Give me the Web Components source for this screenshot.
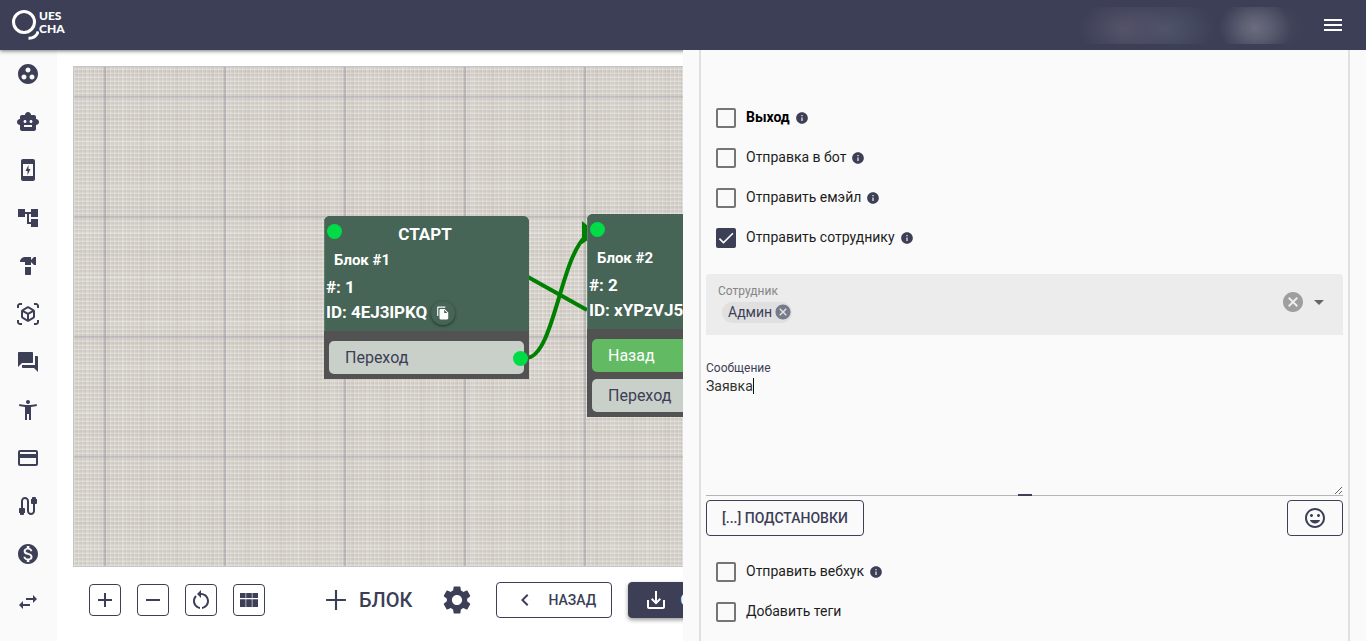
<!DOCTYPE html>
<html lang="ru">
<head>
<meta charset="utf-8">
<meta name="viewport" content="width=device-width, initial-scale=1">
<title>Quescha</title>
<style>
  html, body { margin: 0; height: 100%; }
  body { font: 14px/20px Roboto, sans-serif; color: #1d1d1d; background: #fff; --ink: #3c3f56; }
</style>
</head>
<body>
<app-shell></app-shell>
<script>
const ICONS = {
  group: 'M12 2C6.48 2 2 6.48 2 12s4.48 10 10 10 10-4.48 10-10S17.52 2 12 2zM8 17.5c-1.38 0-2.5-1.12-2.5-2.5s1.12-2.5 2.5-2.5 2.5 1.12 2.5 2.5-1.12 2.5-2.5 2.5zM9.5 8c0-1.38 1.12-2.5 2.5-2.5s2.5 1.12 2.5 2.5-1.12 2.5-2.5 2.5S9.5 9.38 9.5 8zm6.5 9.5c-1.38 0-2.5-1.12-2.5-2.5s1.12-2.5 2.5-2.5 2.5 1.12 2.5 2.5-1.12 2.5-2.5 2.5z',
  robot: 'M20 9V7c0-1.1-.9-2-2-2h-3c0-1.66-1.34-3-3-3S9 3.34 9 5H6c-1.1 0-2 .9-2 2v2c-1.66 0-3 1.34-3 3s1.34 3 3 3v4c0 1.1.9 2 2 2h12c1.1 0 2-.9 2-2v-4c1.66 0 3-1.34 3-3s-1.34-3-3-3zM7.5 11.5c0-.83.67-1.5 1.5-1.5s1.5.67 1.5 1.5S9.83 13 9 13s-1.5-.67-1.5-1.5zM16 17H8v-2h8v2zm-1-4c-.83 0-1.5-.67-1.5-1.5S14.17 10 15 10s1.5.67 1.5 1.5S15.83 13 15 13z',
  charge: 'M14.5 11l-3 6v-4h-2l3-6v4h2zM7 1h10c1.1 0 2 .9 2 2v18c0 1.1-.9 2-2 2H7c-1.1 0-2-.9-2-2V3c0-1.1.9-2 2-2zm0 5v12h10V6H7z',
  tree: 'M22 11V3h-7v3H9V3H2v8h7V8h2v10h4v3h7v-8h-7v3h-2V8h2v3z',
  hammer: 'M18 3l-3 3V3H9C6.24 3 4 5.24 4 8h5v3h6V8l3 3h2V3h-2zM9 13v7c0 .55.45 1 1 1h4c.55 0 1-.45 1-1v-7H9z',
  cube: 'M3 4c0-.55.45-1 1-1h2V1H4C2.34 1 1 2.34 1 4v2h2V4zM3 20v-2H1v2c0 1.66 1.34 3 3 3h2v-2H4c-.55 0-1-.45-1-1zM20 1h-2v2h2c.55 0 1 .45 1 1v2h2V4c0-1.66-1.34-3-3-3zM21 20c0 .55-.45 1-1 1h-2v2h2c1.66 0 3-1.34 3-3v-2h-2v2zM19 14.87V9.13c0-.72-.38-1.38-1-1.73l-5-2.88c-.31-.18-.65-.27-1-.27s-.69.09-1 .27L6 7.39c-.62.36-1 1.02-1 1.74v5.74c0 .72.38 1.38 1 1.73l5 2.88c.31.18.65.27 1 .27s.69-.09 1-.27l5-2.88c.62-.35 1-1.01 1-1.73zm-8 2.3l-4-2.3v-4.63l4 2.33v4.6zm1-6.33L8.04 8.53 12 6.25l3.96 2.28L12 10.84zm5 4.03l-4 2.3v-4.6l4-2.33v4.63z',
  chat: 'M21 6h-2v9H6v2c0 .55.45 1 1 1h11l4 4V7c0-.55-.45-1-1-1zm-4 6V3c0-.55-.45-1-1-1H3c-.55 0-1 .45-1 1v14l4-4h10c.55 0 1-.45 1-1z',
  person: 'M20.5 6c-2.61.7-5.67 1-8.5 1s-5.89-.3-8.5-1L3 8c1.86.5 4 .83 6 1v13h2v-6h2v6h2V9c2-.17 4.14-.5 6-1l-.5-2zM12 6c1.1 0 2-.9 2-2s-.9-2-2-2-2 .9-2 2 .9 2 2 2z',
  card: 'M20 4H4c-1.11 0-1.99.89-1.99 2L2 18c0 1.11.89 2 2 2h16c1.11 0 2-.89 2-2V6c0-1.11-.89-2-2-2zm0 14H4v-6h16v6zm0-10H4V6h16v2z',
  cable: 'M20 5V4c0-.55-.45-1-1-1h-2c-.55 0-1 .45-1 1v1h-1v4c0 .55.45 1 1 1h1v7c0 1.1-.9 2-2 2s-2-.9-2-2V7c0-2.21-1.79-4-4-4S5 4.79 5 7v7H4c-.55 0-1 .45-1 1v4h1v1c0 .55.45 1 1 1h2c.55 0 1-.45 1-1v-1h1v-4c0-.55-.45-1-1-1H7V7c0-1.1.9-2 2-2s2 .9 2 2v10c0 2.21 1.79 4 4 4s4-1.79 4-4v-7h1c.55 0 1-.45 1-1V5h-1z',
  money: 'M12 2C6.48 2 2 6.48 2 12s4.48 10 10 10 10-4.48 10-10S17.52 2 12 2zm1.41 16.09V20h-2.67v-1.93c-1.71-.36-3.16-1.46-3.27-3.4h1.96c.1 1.05.82 1.87 2.65 1.87 1.96 0 2.4-.98 2.4-1.59 0-.83-.44-1.61-2.67-2.14-2.48-.6-4.18-1.62-4.18-3.67 0-1.72 1.39-2.84 3.11-3.21V4h2.67v1.95c1.86.45 2.79 1.86 2.85 3.39H14.3c-.05-1.11-.64-1.87-2.22-1.87-1.5 0-2.4.68-2.4 1.64 0 .84.65 1.39 2.67 1.91s4.18 1.39 4.18 3.91c-.01 1.83-1.38 2.83-3.12 3.16z',
  swap: 'M6.99 11L3 15l3.99 4v-3H14v-2H6.99v-3zM21 9l-3.99-4v3H10v2h7.01v3L21 9z',
  menu: 'M3 18h18v-2H3v2zm0-5h18v-2H3v2zm0-7v2h18V6H3z',
  add: 'M19 13h-6v6h-2v-6H5v-2h6V5h2v6h6v2z',
  addThin: 'M19 12.75h-6.250V19h-1.500v-6.250H5v-1.500h6.250V5h1.500v6.250H19v1.500z',
  remove: 'M19 13H5v-2h14v2z',
  restart: 'M12 5V2L8 6l4 4V7c3.31 0 6 2.69 6 6 0 2.97-2.17 5.43-5 5.91v2.02c3.95-.49 7-3.85 7-7.93 0-4.42-3.58-8-8-8zM6 13c0-1.65.67-3.15 1.76-4.24L6.34 7.34C4.9 8.79 4 10.79 4 13c0 4.08 3.05 7.44 7 7.93v-2.02c-2.83-.48-5-2.94-5-5.91z',
  modules: 'M3 5h5.600v5H3zM9.200 5h5.600v5H9.200zM15.400 5H21v5h-5.600zM3 11.200h5.600V19H3zM9.200 11.200h5.600V19H9.200zM15.400 11.200H21V19h-5.600z',
  settings: 'M19.140 12.940c.04-.3.06-.61.06-.94 0-.32-.02-.64-.07-.94l2.030-1.580c.18-.14.23-.41.12-.61l-1.920-3.320c-.12-.22-.37-.29-.59-.22l-2.390.96c-.5-.38-1.030-.7-1.620-.94l-.36-2.540c-.04-.24-.24-.41-.48-.41h-3.840c-.24 0-.43.17-.47.41l-.36 2.540c-.59.24-1.130.57-1.620.94l-2.390-.96c-.22-.08-.47 0-.59.22L2.740 8.870c-.12.21-.08.47.12.61l2.030 1.580c-.05.3-.09.63-.09.94s.02.64.07.94l-2.030 1.580c-.18.14-.23.41-.12.61l1.920 3.320c.12.22.37.29.59.22l2.390-.96c.5.38 1.030.7 1.620.94l.36 2.540c.05.24.24.41.48.41h3.840c.24 0 .44-.17.47-.41l.36-2.540c.59-.24 1.130-.56 1.620-.94l2.390.96c.22.08.47 0 .59-.22l1.920-3.320c.12-.22.07-.47-.12-.61l-2.010-1.580zM12 15.600c-1.980 0-3.600-1.620-3.600-3.600s1.620-3.600 3.600-3.600 3.600 1.620 3.600 3.600-1.620 3.600-3.600 3.600z',
  left: 'M15.410 7.410L14 6l-6 6 6 6 1.410-1.410L10.830 12z',
  save: 'M19 12v7H5v-7H3v7c0 1.100.9 2 2 2h14c1.100 0 2-.9 2-2v-7h-2zm-6 .670l2.590-2.580L17 11.500l-5 5-5-5 1.410-1.410L11 12.670V3h2z',
  info: 'M12 2C6.480 2 2 6.480 2 12s4.480 10 10 10 10-4.480 10-10S17.520 2 12 2zm1 15h-2v-6h2v6zm0-8h-2V7h2v2z',
  cancel: 'M12 2C6.470 2 2 6.470 2 12s4.470 10 10 10 10-4.470 10-10S17.530 2 12 2zm5 13.590L15.590 17 12 13.410 8.410 17 7 15.590 10.590 12 7 8.410 8.410 7 12 10.590 15.590 7 17 8.410 13.410 12 17 15.590z',
  smile: 'M11.990 2C6.470 2 2 6.480 2 12s4.470 10 9.990 10C17.520 22 22 17.520 22 12S17.520 2 11.990 2zM12 20c-4.420 0-8-3.580-8-8s3.580-8 8-8 8 3.580 8 8-3.580 8-8 8zm3.500-9c.83 0 1.500-.67 1.500-1.500S16.330 8 15.500 8 14 8.670 14 9.500s.67 1.500 1.500 1.500zm-7 0c.83 0 1.500-.67 1.500-1.500S9.330 8 8.500 8 7 8.670 7 9.500 7.670 11 8.500 11zm3.500 6.500c2.330 0 4.310-1.460 5.110-3.500H6.890c.8 2.040 2.780 3.500 5.110 3.500z',
  copy: 'M16 1H4c-1.100 0-2 .9-2 2v14h2V3h12V1zm-1 4l6 6v10c0 1.100-.9 2-2 2H7.990C6.890 23 6 22.100 6 21l.01-14c0-1.100.89-2 1.990-2h7zm-1 7h5.500L14 6.500V12z',
  drop: 'M7 10l5 5 5-5z',
  check: 'M9 16.200L4.800 12l-1.400 1.400L9 19 21 7l-1.400-1.400L9 16.200z'
};

const define = (name, markup, setup) => customElements.define(name, class extends HTMLElement {
  connectedCallback() {
    if (this.shadowRoot) return;
    const t = document.createElement('template');
    t.innerHTML = markup;
    const root = this.attachShadow({ mode: 'open' });
    root.append(t.content.cloneNode(true));
    if (setup) setup(this, root);
  }
});

define('ui-icon', `
  <style>
    :host { display: block; flex: none; width: var(--size, 24px); height: var(--size, 24px); }
    svg { display: block; width: 100%; height: 100%; fill: currentColor; }
  </style>
  <svg viewBox="0 0 24 24" aria-hidden="true"><path/></svg>`,
  (el, root) => root.querySelector('path').setAttribute('d', ICONS[el.getAttribute('name')]));

define('ui-button', `
  <style>
    :host { display: block; flex: none; }
    button { box-sizing: border-box; display: flex; align-items: center; justify-content: center; width: 100%; height: 36px;
      padding: 0 15px; border: 1px solid var(--ink); border-radius: 4px; background: none; color: var(--ink);
      font: 500 14px/20px Roboto, sans-serif; cursor: pointer; white-space: nowrap; }
    :host([square]) button { width: 32px; height: 32px; padding: 0; }
    :host([plain]) button { border: 0; padding: 0; gap: 6px; font-size: 20px; }
    :host([back]) button { gap: 12px; }
    :host([filled]) button { background: var(--ink); color: #fff; gap: 12px; box-shadow: 0 2px 4px #0006; }
  </style>
  <button type="button"><slot></slot></button>`,
  (el, root) => { if (el.title) root.querySelector('button').setAttribute('aria-label', el.title); });

define('app-header', `
  <style>
    :host { display: flex; align-items: center; height: 50px; padding: 0 21px 0 12px; background: var(--ink); color: #fff;
      box-shadow: 0 1px 4px #0008; position: relative; z-index: 3; box-sizing: border-box; }
    a { display: flex; color: inherit; text-decoration: none; }
    svg { width: 27px; height: 32px; flex: none; }
    .word { font: 900 12px/13px Lato, sans-serif; display: grid; align-content: start; }
    .user { margin-left: auto; width: 232px; height: 37px; margin-right: 12px;
      background: radial-gradient(ellipse 36px 30px at 178px 21px, #6b6d7e, #6b6d7e00),
        radial-gradient(ellipse 40px 26px at 188px 20px, #54566a88, #54566a00),
        radial-gradient(ellipse 44px 32px at 46px 22px, #54536a, #54536a00),
        radial-gradient(ellipse 50px 32px at 88px 22px, #50546a, #50546a00); }
    button { border: 0; padding: 0; background: none; color: inherit; cursor: pointer; }
  </style>
  <a href="#" aria-label="Quescha">
    <svg viewBox="0 0 27 32" fill="none" stroke="#fff"><circle cx="12" cy="13" r="10.500" stroke-width="3"/><path d="M16.500 29.200C21 29.300 24.800 26.700 26.200 22.400" stroke-width="3"/></svg>
    <span class="word"><span>UES</span><span>CHA</span></span>
  </a>
  <div class="user"></div>
  <button type="button" aria-label="Меню"><ui-icon name="menu"></ui-icon></button>`);

define('side-nav', `
  <style>
    :host { display: flex; flex-direction: column; flex: none; width: 57px; background: #fafafa; }
    a { display: flex; align-items: center; justify-content: center; height: 48px; padding-right: 1px; color: var(--ink); }
  </style>`,
  (el, root) => {
    const items = { group: 'Группы', robot: 'Боты', charge: 'Зарядка', tree: 'Схема', hammer: 'Инструменты', cube: 'Объекты',
      chat: 'Чаты', person: 'Клиенты', card: 'Оплата', cable: 'Интеграции', money: 'Финансы', swap: 'Обмен' };
    for (const [icon, label] of Object.entries(items)) {
      const a = document.createElement('a');
      a.href = '#' + icon;
      a.setAttribute('aria-label', label);
      a.innerHTML = `<ui-icon name="${icon}"></ui-icon>`;
      root.append(a);
    }
  });

define('flow-node', `
  <style>
    :host { position: absolute; width: 205px; border-radius: 6px 6px 0 0; overflow: hidden; background: #525252; color: #fff; }
    header { height: 115px; box-sizing: border-box; padding: 8px 5px 0 1px; background: #466556; font: 700 17px/20px Roboto, sans-serif;
      border-left: 1px solid #5c8068; }
    .title { height: 20px; text-align: center; }
    .name { font-size: 15px; margin: 6px 0 7px 8px; }
    .id { display: flex; align-items: center; gap: 4px; height: 30px; }
    .copy { display: grid; place-items: center; width: 24px; height: 24px; border: 0; border-radius: 50%; padding: 0; margin-top: 2px;
      background: none; color: #fff; box-shadow: 0 1px 3px #0008; --size: 14px; }
    .ports { display: grid; gap: 7px; padding: 10px 5px 5px; }
    .dot { position: absolute; left: 3px; top: 8px; width: 15px; height: 15px; border-radius: 50%; background: #00dc46; }
  </style>
  <header>
    <span class="dot"></span>
    <div class="title"><slot name="title"></slot></div>
    <div class="name"><slot name="name"></slot></div>
    <div><slot name="num"></slot></div>
    <div class="id"><slot name="id"></slot><button class="copy" type="button" aria-label="Копировать"><ui-icon name="copy"></ui-icon></button></div>
  </header>
  <div class="ports"><slot></slot></div>`);

define('flow-port', `
  <style>
    :host { display: flex; align-items: center; position: relative; height: 33px; padding-left: 16px; border-radius: 5px;
      background: #c9d0c9; color: #3c3f56; font: 16px/20px Roboto, sans-serif; }
    :host([kind=back]) { background: #62bb63; color: #fff; }
    i { position: absolute; right: -4px; top: 10px; width: 15px; height: 15px; border-radius: 50%; background: #00dc46; }
  </style>
  <slot></slot><i></i>`);

define('flow-canvas', `
  <style>
    :host { display: block; position: relative; flex: 1; min-height: 500px; box-sizing: border-box; margin-left: 16px; overflow: hidden;
      border: 1px solid #c4c6c8; border-right: 0;
      background:
        repeating-linear-gradient(90deg, #8e8a9600 0 29px, #8e8a962a 29px 30px, #8e8a9660 30px 32px, #8e8a9600 32px 120px),
        repeating-linear-gradient(0deg, #8e8a9600 0 108px, #8e8a9658 108px 110px, #8e8a9600 110px 120px),
        repeating-linear-gradient(90deg, #fff3 0 1px, #0000 1px 3px, #8a807610 3px 4px),
        repeating-linear-gradient(0deg, #fff3 0 1px, #0000 1px 2px, #8a807616 2px 4px),
        repeating-linear-gradient(90deg, #0000 0 13px, #fff2 13px 15px, #0000 15px 31px, #877b700c 31px 35px),
        repeating-linear-gradient(0deg, #0000 0 17px, #fff2 17px 20px, #0000 20px 41px, #877b700c 41px 45px),
        #d8d3cd; }
    svg { position: absolute; left: 0; top: 0; width: 760px; height: 500px; fill: none; stroke: #008000; stroke-width: 4; }
    .start { left: 250px; top: 149px; }
    .second { left: 513px; top: 147px; }
  </style>
  <svg aria-hidden="true"><path d="M454 210L513 243"/><path d="M452 291C480 291 486 190 513 168"/><path d="M508 154l6 5v14l-6 4z" fill="#008000" stroke="none"/></svg>
  <flow-node class="start">
    <span slot="title">СТАРТ</span><span slot="name">Блок #1</span><span slot="num">#: 1</span><span slot="id">ID: 4EJ3lPKQ</span>
    <flow-port>Переход</flow-port>
  </flow-node>
  <flow-node class="second">
    <span slot="name">Блок #2</span><span slot="num">#: 2</span><span slot="id">ID: xYPzVJ5L</span>
    <flow-port kind="back">Назад</flow-port>
    <flow-port>Переход</flow-port>
  </flow-node>`);

define('work-area', `
  <style>
    :host { display: flex; flex-direction: column; flex: 1; min-width: 0; overflow: hidden; padding-top: 16px; }
    .bar { display: flex; align-items: center; height: 66px; padding: 0 0 8px 32px; }
    .zoom { display: flex; gap: 16px; margin-right: 54px; }
    .add { --size: 34px; margin-right: 28px; }
    .gear { --size: 34px; margin-right: 22px; }
    .back { width: 116px; margin-right: 16px; }
  </style>
  <flow-canvas></flow-canvas>
  <div class="bar">
    <div class="zoom">
      <ui-button square title="Увеличить"><ui-icon name="add"></ui-icon></ui-button>
      <ui-button square title="Уменьшить"><ui-icon name="remove"></ui-icon></ui-button>
      <ui-button square title="Сбросить"><ui-icon name="restart"></ui-icon></ui-button>
      <ui-button square title="Сетка"><ui-icon name="modules"></ui-icon></ui-button>
    </div>
    <ui-button class="add" plain><ui-icon name="addThin"></ui-icon>БЛОК</ui-button>
    <ui-button class="gear" plain title="Настройки"><ui-icon name="settings"></ui-icon></ui-button>
    <ui-button class="back" back><ui-icon name="left"></ui-icon>НАЗАД</ui-button>
    <ui-button filled><ui-icon name="save"></ui-icon>СОХРАНИТЬ</ui-button>
  </div>`);

define('check-row', `
  <style>
    :host { display: flex; align-items: center; height: 40px; padding-left: 10px; }
    label { display: flex; align-items: center; gap: 10px; }
    .text { padding-bottom: 2px; }
    :host([strong]) label { font-weight: 700; color: #000; }
    .box { display: grid; place-items: center; color: #fff; --size: 20px; }
    .box > * { grid-area: 1 / 1; }
    input { appearance: none; box-sizing: border-box; width: 20px; height: 20px; margin: 0; border: 2px solid #757575; border-radius: 2px; }
    input:checked { background: var(--ink); border-color: var(--ink); }
    input:not(:checked) + ui-icon { visibility: hidden; }
    .box ui-icon { pointer-events: none; }
    .info { --size: 14px; color: var(--ink); margin-left: 5px; }
    :host([noinfo]) .info { display: none; }
  </style>
  <label><span class="box"><input type="checkbox"><ui-icon name="check"></ui-icon></span><span class="text"><slot></slot></span></label>
  <ui-icon class="info" name="info"></ui-icon>`,
  (el, root) => { root.querySelector('input').checked = el.hasAttribute('checked'); });

define('staff-select', `
  <style>
    :host { display: grid; grid-template-columns: 1fr auto auto; align-items: center; box-sizing: border-box; height: 61px; padding: 0 12px;
      background: #ececec; border-radius: 4px 4px 0 0; }
    .field { display: grid; padding-bottom: 4px; }
    label { font-size: 12px; line-height: 16px; color: #858585; }
    .value { display: grid; margin: 3px 0 0 4px; }
    .value > * { grid-area: 1 / 1; }
    .chip { display: flex; align-items: center; justify-content: flex-end; box-sizing: border-box; width: 70px; height: 21px; border-radius: 10px; background: #e0e0e0; }
    select { appearance: none; border: 0; background: none; padding: 0 0 0 6px; margin: 0; height: 21px; color: var(--ink);
      font: 14px/20px Roboto, sans-serif; outline: none; }
    button { display: block; border: 0; padding: 0; background: none; color: #9e9e9e; }
    .chip button { color: #777a88; --size: 18px; position: relative; z-index: 1; }
    .clear { margin-bottom: 6px; }
    .arrow { color: #666; --size: 24px; margin: 0 0 6px 2px; }
  </style>
  <div class="field">
    <label for="staff">Сотрудник</label>
    <div class="value">
      <span class="chip"><button type="button" aria-label="Убрать"><ui-icon name="cancel"></ui-icon></button></span>
      <select id="staff"><option>Админ</option></select>
    </div>
  </div>
  <button class="clear" type="button" aria-label="Очистить"><ui-icon name="cancel"></ui-icon></button>
  <ui-icon class="arrow" name="drop"></ui-icon>`);

define('message-field', `
  <style>
    :host { display: grid; position: relative; border-bottom: 1px solid #b4b4b4; }
    label { font-size: 12px; line-height: 16px; color: var(--ink); }
    textarea { display: block; box-sizing: border-box; width: 100%; height: 119px; margin: 0; padding: 0; border: 0; outline: none; resize: vertical;
      color: #333; font: 14px/20px Roboto, sans-serif;
      background: linear-gradient(#111, #111) 47px 2px / 1px 16px no-repeat; }
    i { position: absolute; left: 50%; bottom: -1px; width: 14px; height: 2px; margin-left: -7px; background: var(--ink); }
  </style>
  <label for="msg">Сообщение</label>
  <textarea id="msg" spellcheck="false">Заявка</textarea>
  <i></i>`);

define('block-drawer', `
  <style>
    :host { display: block; flex: none; box-sizing: border-box; width: 50%; padding: 0 16px; overflow: hidden; background: #fafafa; position: relative; z-index: 4; }
    form { box-sizing: border-box; height: 100%; padding: 48px 5px 0; border: solid #e0e0e0; border-width: 0 2px; }
    staff-select { margin: 16px 0 25px; }
    .actions { display: flex; justify-content: space-between; margin: 4px 0 16px; }
    .emoji { width: 56px; }
  </style>
  <form>
    <check-row strong>Выход</check-row>
    <check-row>Отправка в бот</check-row>
    <check-row>Отправить емэйл</check-row>
    <check-row checked>Отправить сотруднику</check-row>
    <staff-select></staff-select>
    <message-field></message-field>
    <div class="actions">
      <ui-button>[...] ПОДСТАНОВКИ</ui-button>
      <ui-button class="emoji" title="Эмодзи"><ui-icon name="smile"></ui-icon></ui-button>
    </div>
    <check-row>Отправить вебхук</check-row>
    <check-row noinfo>Добавить теги</check-row>
  </form>`);

define('app-shell', `
  <style>
    :host { display: flex; flex-direction: column; height: 100vh; overflow: hidden; }
    main { display: flex; flex: 1; min-height: 0; }
  </style>
  <app-header></app-header>
  <main><side-nav></side-nav><work-area></work-area><block-drawer></block-drawer></main>`);
</script>
</body>
</html>
